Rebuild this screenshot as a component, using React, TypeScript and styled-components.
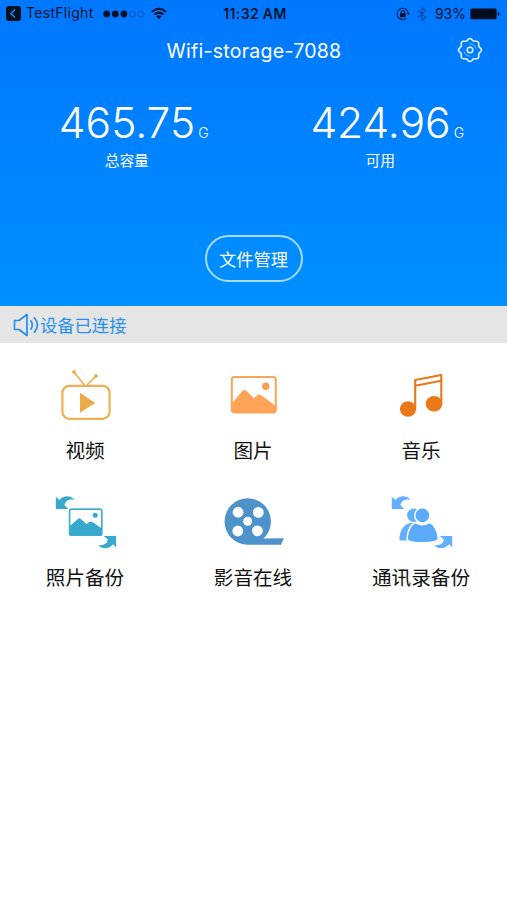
import React from "react";
import styled, { createGlobalStyle } from "styled-components";

const GlobalStyle = createGlobalStyle`
  * { box-sizing: border-box; }
  body { margin: 0; background: #fff; }
`;

const Screen = styled.main`
  width: 507px;
  height: 900px;
  background: #fff;
  overflow: hidden;
  font-family: Inter, "Noto Sans CJK SC", sans-serif;
  white-space: nowrap;
`;

const Header = styled.header`
  height: 306px;
  background: linear-gradient(#0077ff, #0090ff);
  color: #fff;
  display: flex;
  flex-direction: column;
`;

const StatusBar = styled.div`
  height: 27px;
  display: grid;
  grid-template-columns: 1fr auto 1fr;
  align-items: center;
  padding: 0 7px 0 6px;
  color: #04152e;
  font-size: 14px;
`;

const StatusGroup = styled.div<{ $end?: boolean }>`
  display: flex;
  align-items: center;
  justify-content: ${(p) => (p.$end ? "flex-end" : "flex-start")};
`;

const AppName = styled.span`
  margin: -2px 9px 0 5px;
  font-size: 14px;
  letter-spacing: 0.3px;
`;

const Clock = styled.span`
  font-weight: 600;
  font-size: 14px;
  letter-spacing: 0.35px;
  padding: 0 0 0 4px;
`;

const Percent = styled.span`
  margin: 0 4px 0 7px;
  font-size: 14px;
`;

const TitleBar = styled.div`
  height: 46px;
  display: grid;
  grid-template-columns: 60px 1fr 60px;
  align-items: center;
`;

const Title = styled.h1`
  grid-column: 2;
  margin: 2px 0 0 1px;
  text-align: center;
  font-weight: 400;
  font-size: 19.5px;
  letter-spacing: 0.27px;
`;

const SettingsButton = styled.button`
  display: flex;
  justify-content: flex-start;
  border: 0;
  padding: 0 0 0 10px;
  background: none;
  height: 26px;
`;

const Stats = styled.section`
  display: grid;
  grid-template-columns: 1fr 1fr;
  height: 162px;
  padding-top: 23px;
`;

const Stat = styled.div`
  display: flex;
  flex-direction: column;
  align-items: center;
`;

const Amount = styled.div`
  display: flex;
  align-items: baseline;
  height: 54px;
  line-height: 54px;
  margin-left: 14px;
`;

const Value = styled.span`
  font-size: 42.5px;
  font-weight: 350;
`;

const Unit = styled.span`
  font-size: 14px;
  font-weight: 350;
  margin-left: 3px;
`;

const StatLabel = styled.div`
  margin-top: 1px;
  font-size: 14.7px;
  line-height: 20px;
`;

const ManageButton = styled.button`
  align-self: center;
  width: 98px;
  height: 47px;
  border: 2px solid #a6dcff;
  border-radius: 24px;
  background: none;
  color: #fff;
  font: 400 17.2px/1 Inter, "Noto Sans CJK SC", sans-serif;
  padding: 2px 0 0;
`;

const Notice = styled.section`
  height: 37px;
  background: #e5e5e5;
  color: #2590ee;
  display: flex;
  align-items: center;
  padding-left: 13px;
  font-size: 17.3px;
  gap: 1px;
`;

const Grid = styled.section`
  display: grid;
  grid-template-columns: repeat(3, 168px);
  grid-auto-rows: 127px;
  padding: 21px 0 0 1px;
`;

const Tile = styled.div`
  display: flex;
  flex-direction: column;
  align-items: center;
`;

const TileLabel = styled.span`
  margin-top: 9px;
  font-size: 19.6px;
  line-height: 28px;
  color: #111;
`;

const TileSvg = ({ children }: { children: React.ReactNode }) => (
  <svg width="80" height="64" viewBox="0 0 80 64" fill="none">{children}</svg>
);

const SwapArrows = () => (
  <g fill="currentColor">
    <path d="M10.8 6L14.6 9C18 4.8 25 3.6 29.6 8.8C24.5 7.4 20.5 9.6 19.4 14L23.4 18H10.8Z" />
    <path d="M71.2 45H58.8L63 48.8C61.8 53 58 54.8 53.3 54.2C57.5 59 64.5 57.6 68 53.2L71.2 56.4Z" />
  </g>
);

const VideoIcon = () => (
  <TileSvg>
    <g stroke="#edb057" strokeWidth="2.2">
      <rect x="17.4" y="21.8" width="47.2" height="33" rx="7" />
      <path d="M29 8L39.3 21M51 12L42 21" strokeWidth="1.7" />
    </g>
    <g fill="#edaa4b">
      <circle cx="29" cy="7.9" r="1.9" />
      <circle cx="51" cy="12" r="1.9" />
      <path d="M35 28.7V48.7L50.2 39Z" />
    </g>
  </TileSvg>
);

const PictureIcon = () => (
  <TileSvg>
    <rect x="18.8" y="13" width="44" height="35.6" rx="2.5" stroke="#f9a55b" strokeWidth="2" />
    <path d="M18.8 39.5L29.2 27.3Q31.5 24.6 33.8 27.2L40.8 34.2L44.3 31.2Q46.2 29.6 48.3 31.2L62.8 42V46Q62.8 48.6 60.3 48.6H21.3Q18.8 48.6 18.8 46Z" fill="#ffa356" />
    <circle cx="52.8" cy="22.3" r="3.7" fill="#f9a052" />
  </TileSvg>
);

const MusicIcon = () => (
  <TileSvg>
    <g fill="#ea7818">
      <ellipse cx="27" cy="45" rx="8.1" ry="7.7" />
      <ellipse cx="53" cy="39.8" rx="8.3" ry="7.8" />
    </g>
    <path d="M34.2 45V16L60.3 11V40M34.2 21.8L60.3 16.8" stroke="#ea7818" strokeWidth="2.1" strokeLinejoin="round" />
  </TileSvg>
);

const PhotoBackupIcon = () => (
  <TileSvg>
    <g color="#38a9cb"><SwapArrows /></g>
    <rect x="24.6" y="18.2" width="32.2" height="26" rx="2" stroke="#44adcb" strokeWidth="1.7" />
    <path d="M24.6 35.2L32.8 28Q34.3 26.7 35.8 28L41.5 33L44.2 31Q45.7 29.8 47.5 31L56.8 37.5V44.2H24.6Z" fill="#38a9cb" />
    <circle cx="50.2" cy="24.3" r="2.5" fill="#38a9cb" />
  </TileSvg>
);

const ReelIcon = () => (
  <TileSvg>
    <path d="M34.8 7.3A23.2 23.2 0 0 1 50.5 47.5L70.8 47.3L68 53.8H34.8A23.2 23.2 0 0 1 34.8 7.3Z" fill="#4e92cb" />
    <g fill="#fff">
      <circle cx="25.1" cy="21.2" r="5.4" />
      <circle cx="45.3" cy="21.4" r="5.4" />
      <circle cx="24.8" cy="40" r="5.4" />
      <circle cx="44.4" cy="39.8" r="5.4" />
      <circle cx="34.7" cy="30.2" r="4.5" />
    </g>
  </TileSvg>
);

const ContactsIcon = () => (
  <TileSvg>
    <g color="#62b0fb"><SwapArrows /></g>
    <g fill="#62b0fb">
      <circle cx="32.8" cy="24.2" r="6.7" />
      <path d="M18.3 48Q19.5 33.5 30 32H36L32 49.5H20Q18.3 49.5 18.3 48Z" />
    </g>
    <g fill="#5caafa" stroke="#fff" strokeWidth="1.5">
      <path d="M26 47.5Q27.5 34 34.5 31.5Q42 36 48.5 31.5Q55.5 34 57.4 47Q57 51.8 41.7 51.8T26 47.5Z" />
      <circle cx="41.4" cy="24.4" r="7.6" />
    </g>
  </TileSvg>
);

const BackIcon = () => (
  <svg width="15" height="15" viewBox="0 0 15 15">
    <rect width="15" height="15" rx="3" fill="#051020" />
    <path d="M9 3.5L5 7.5L9 11.5" fill="none" stroke="#2588ee" strokeWidth="1.5" />
  </svg>
);

const SignalIcon = () => (
  <svg width="42" height="10" viewBox="0 0 42 10">
    <g fill="#03122a">
      <circle cx="3.7" cy="5" r="3.4" />
      <circle cx="12.3" cy="5" r="3.4" />
      <circle cx="20.9" cy="5" r="3.4" />
    </g>
    <g fill="none" stroke="#0653ad" strokeWidth="0.9">
      <circle cx="29.3" cy="5" r="3" />
      <circle cx="37.9" cy="5" r="3" />
    </g>
  </svg>
);

const WifiSvg = styled.svg`
  margin-left: 6px;
`;

const WifiIcon = () => (
  <WifiSvg width="16" height="13" viewBox="0 0 16 13">
    <path d="M1 4.7Q8-1.3 15 4.7M3.5 7.5Q8 3.7 12.5 7.5" fill="none" stroke="#03122a" strokeWidth="2" />
    <path d="M5.3 9.2Q8 7.1 10.7 9.2L8 12Z" fill="#03122a" />
  </WifiSvg>
);

const LockIcon = () => (
  <svg width="15" height="14" viewBox="0 0 15 14">
    <path d="M10 11.5A5.6 5.6 0 1 1 12.3 6.2" fill="none" stroke="#04214b" strokeWidth="1.1" />
    <path d="M10.5 5.7H14L12.3 8.2Z" fill="#04214b" />
    <rect x="4" y="6.2" width="5.6" height="4" fill="#03122a" />
    <path d="M5.2 6.5V5A1.6 1.6 0 0 1 8.4 5V6.5" fill="none" stroke="#03122a" strokeWidth="1" />
  </svg>
);

const BluetoothSvg = styled.svg`
  margin-left: 5px;
`;

const BluetoothIcon = () => (
  <BluetoothSvg width="12" height="16" viewBox="0 0 12 16">
    <path d="M2 4.5L9.7 11.2L6 14.5V1.5L9.7 4.8L2 11.5" fill="none" stroke="#064b9e" strokeWidth="1.1" />
  </BluetoothSvg>
);

const BatteryIcon = () => (
  <svg width="30" height="12" viewBox="0 0 30 12">
    <rect x="0.4" y="0.4" width="26.2" height="10.8" rx="1.5" fill="#020c1d" />
    <path d="M27.8 3.7Q29.5 4.1 29.5 5.9T27.8 8.1Z" fill="#020c1d" />
  </svg>
);

const gearPath = (() => {
  const points: string[] = [];
  for (let i = 0; i <= 96; i += 1) {
    const angle = (i / 96) * Math.PI * 2;
    const radius = 10.5 + 0.95 * Math.cos(angle * 8);
    points.push(`${(13 + radius * Math.sin(angle)).toFixed(2)} ${(13 - radius * Math.cos(angle)).toFixed(2)}`);
  }
  return `M${points.join("L")}Z`;
})();

const GearIcon = () => (
  <svg width="26" height="26" viewBox="0 0 26 26" fill="none" stroke="#e0f3ff">
    <path d={gearPath} strokeWidth="1.6" strokeLinejoin="round" />
    <circle cx="13" cy="13" r="2.8" strokeWidth="1.5" />
    <path d="M12.5 6.8Q17.5 6.5 19 11.5M7 14.5Q8.5 19 13 19.2" strokeWidth="0.7" opacity="0.75" />
  </svg>
);

const SpeakerIcon = () => (
  <svg width="26" height="24" viewBox="0 0 26 24" fill="none" stroke="#258fe9" strokeWidth="1.7" strokeLinejoin="round" strokeLinecap="round">
    <path d="M1.5 7.5H6L14 1.5V22.5L6 16.5H1.5Z" />
    <path d="M18 8Q20.5 12 18 16M21.4 4.8Q27.5 12 21.4 19.3" />
  </svg>
);

const tiles = [
  { label: "视频", Icon: VideoIcon },
  { label: "图片", Icon: PictureIcon },
  { label: "音乐", Icon: MusicIcon },
  { label: "照片备份", Icon: PhotoBackupIcon },
  { label: "影音在线", Icon: ReelIcon },
  { label: "通讯录备份", Icon: ContactsIcon },
];

const stats = [
  { value: "465.75", label: "总容量" },
  { value: "424.96", label: "可用" },
];

export default function App() {
  return (
    <Screen>
      <GlobalStyle />
      <Header>
        <StatusBar>
          <StatusGroup>
            <BackIcon />
            <AppName>TestFlight</AppName>
            <SignalIcon />
            <WifiIcon />
          </StatusGroup>
          <Clock>11:32 AM</Clock>
          <StatusGroup $end>
            <LockIcon />
            <BluetoothIcon />
            <Percent>93%</Percent>
            <BatteryIcon />
          </StatusGroup>
        </StatusBar>
        <TitleBar>
          <Title>Wifi-storage-7088</Title>
          <SettingsButton aria-label="设置"><GearIcon /></SettingsButton>
        </TitleBar>
        <Stats>
          {stats.map((s) => (
            <Stat key={s.label}>
              <Amount>
                <Value>{s.value}</Value>
                <Unit>G</Unit>
              </Amount>
              <StatLabel>{s.label}</StatLabel>
            </Stat>
          ))}
        </Stats>
        <ManageButton>文件管理</ManageButton>
      </Header>
      <Notice>
        <SpeakerIcon />
        <span>设备已连接</span>
      </Notice>
      <Grid>
        {tiles.map(({ label, Icon }) => (
          <Tile key={label}>
            <Icon />
            <TileLabel>{label}</TileLabel>
          </Tile>
        ))}
      </Grid>
    </Screen>
  );
}
